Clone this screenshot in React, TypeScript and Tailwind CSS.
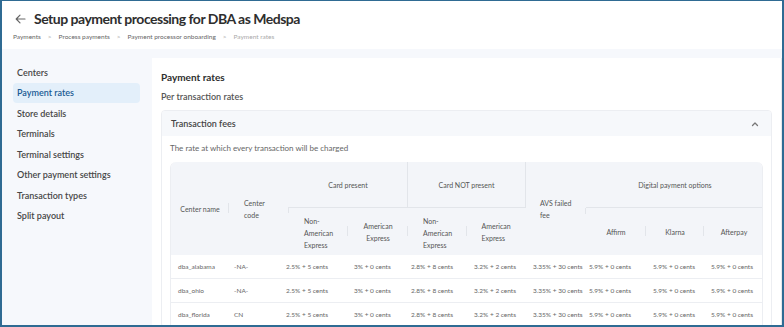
import React from "react";

const sidebar = [
  "Centers",
  "Payment rates",
  "Store details",
  "Terminals",
  "Terminal settings",
  "Other payment settings",
  "Transaction types",
  "Split payout",
];

const rows = [
  ["dba_alabama", "-NA-"],
  ["dba_ohio", "-NA-"],
  ["dba_florida", "CN"],
];
const vals = [
  "2.5% + 5 cents",
  "3% + 0 cents",
  "2.8% + 8 cents",
  "3.2% + 2 cents",
  "3.35% + 30 cents",
  "5.9% + 0 cents",
  "5.9% + 0 cents",
  "5.9% + 0 cents",
];

function Sep({ className }: { className: string }) {
  return <span className={"absolute right-0 w-px bg-[#e2e5ea] " + className} />;
}

export default function App() {
  return (
    <div className="w-[784px] h-[327px] overflow-hidden border-t border-l-2 border-r-2 border-b-2 border-[#2f6b93] bg-[#f6f8fc] flex flex-col font-['Lato',sans-serif]">
      {/* Header */}
      <div className="h-[48px] bg-white shrink-0 pl-[11px] pt-[8px]">
        <div className="flex items-center h-[20px]">
          <svg width="11" height="10" viewBox="0 0 11 10" className="ml-[2px] mr-[8px]">
            <path d="M10 5H1.5M5 1.2L1.2 5 5 8.8" fill="none" stroke="#666" strokeWidth="1.2" strokeLinecap="round" strokeLinejoin="round" />
          </svg>
          <span className="text-[14px] tracking-[-0.5px] font-bold text-[#2e2e2e] leading-[20px]">Setup payment processing for DBA as Medspa</span>
        </div>
        <div className="flex items-center gap-[7px] mt-[3px] text-[6.5px] leading-[10px] text-[#666]">
          <span>Payments</span>
          <span className="text-[#aaa]">&gt;</span>
          <span>Process payments</span>
          <span className="text-[#aaa]">&gt;</span>
          <span>Payment processor onboarding</span>
          <span className="text-[#aaa]">&gt;</span>
          <span className="text-[#aaa]">Payment rates</span>
        </div>
      </div>

      <div className="flex flex-1 min-h-0">
        {/* Sidebar */}
        <div className="w-[150px] shrink-0 pt-[13px] pl-[11px] pr-[12px]">
          {sidebar.map((s) => (
            <div
              key={s}
              className={
                "h-[20.5px] flex items-center pl-[4px] rounded-[4px] text-[9px] font-semibold " +
                (s === "Payment rates" ? "bg-[#e3effa] text-[#1a5b94]" : "text-[#474747]")
              }
            >
              {s}
            </div>
          ))}
        </div>

        {/* Main */}
        <div className="flex-1 pt-[9px] min-w-0">
          <div className="bg-white h-full pl-[9px] pr-[9px] pt-[12px] border-r border-[#e6e8ec]">
            <div className="text-[10px] leading-[14px] font-bold text-[#2e2e2e]">Payment rates</div>
            <div className="text-[9px] leading-[12px] font-semibold text-[#555] mt-[7px]">Per transaction rates</div>
            <div className="mt-[7px] border border-[#eceef2] rounded-[4px] overflow-hidden">
              <div className="h-[25px] bg-[#f6f8fb] flex items-center justify-between px-[9px]">
                <span className="text-[9px] font-semibold text-[#444]">Transaction fees</span>
                <svg width="8" height="6" viewBox="0 0 8 6" className="mr-[3px]">
                  <path d="M1.5 4.5L4 2 6.5 4.5" fill="none" stroke="#777" strokeWidth="1.3" strokeLinecap="round" strokeLinejoin="round" />
                </svg>
              </div>
              <div className="px-[8px] pt-[7px]">
                <div className="text-[8px] leading-[10px] text-[#666]">The rate at which every transaction will be charged</div>
                {/* Table */}
                <div className="mt-[9px] rounded-t-[6px] border-l border-r border-[#eceef2] overflow-hidden text-[7px]">
                  <div className="grid grid-cols-[58px_60px_59px_60px_59px_59px_60px_60px_58px_60px] grid-rows-[46px_47px] bg-[#f3f5f9] text-[#555] leading-[12px]">
                    <div className="row-span-2 relative flex items-center justify-center">
                      Center name
                      <Sep className="top-[41px] h-[10px]" />
                    </div>
                    <div className="row-span-2 relative flex items-center justify-center">
                      <span className="text-left w-[30px]">Center code</span>
                      <Sep className="top-[45px] h-[6px]" />
                    </div>
                    <div className="col-span-2 flex items-center justify-center border-r border-b border-[#e2e5ea]">Card present</div>
                    <div className="col-span-2 flex items-center justify-center border-r border-b border-[#e2e5ea]">Card NOT present</div>
                    <div className="row-span-2 relative flex items-center justify-center">
                      <span className="text-left w-[32px]">AVS failed fee</span>
                      <Sep className="top-[46px] h-[6px]" />
                    </div>
                    <div className="col-span-3 flex items-center justify-center border-b border-[#e2e5ea]">Digital payment options</div>
                    <div className="relative flex items-center justify-center pt-[3px]">
                      <span className="text-left w-[29px]">Non- American Express</span>
                      <Sep className="top-[18px] h-[10px]" />
                    </div>
                    <div className="relative flex items-center justify-center pt-[1px]">
                      <span className="text-center w-[30px]">American Express</span>
                      <Sep className="top-[18px] h-[10px]" />
                    </div>
                    <div className="relative flex items-center justify-center pt-[3px]">
                      <span className="text-left w-[29px]">Non- American Express</span>
                      <Sep className="top-[18px] h-[10px]" />
                    </div>
                    <div className="relative flex items-center justify-center pt-[1px]">
                      <span className="text-left w-[30px]">American Express</span>
                    </div>
                    <div className="relative flex items-center justify-center">
                      Affirm
                      <Sep className="top-[18px] h-[10px]" />
                    </div>
                    <div className="relative flex items-center justify-center">
                      Klarna
                      <Sep className="top-[18px] h-[10px]" />
                    </div>
                    <div className="relative flex items-center justify-center">Afterpay</div>
                  </div>
                  {rows.map((r) => (
                    <div
                      key={r[0]}
                      className="grid grid-cols-[56px_52px_68px_57px_63px_59px_56px_64px_58px_60px] h-[24px] border-b border-[#eceef2] text-[#666] text-[6.5px] items-center"
                    >
                      <div className="pl-[7px] whitespace-nowrap">{r[0]}</div>
                      <div className="pl-[7px] whitespace-nowrap">{r[1]}</div>
                      {vals.map((v, i) => (
                        <div key={i} className="pl-[7px] whitespace-nowrap">{v}</div>
                      ))}
                    </div>
                  ))}
                </div>
              </div>
            </div>
          </div>
        </div>
      </div>
    </div>
  );
}
